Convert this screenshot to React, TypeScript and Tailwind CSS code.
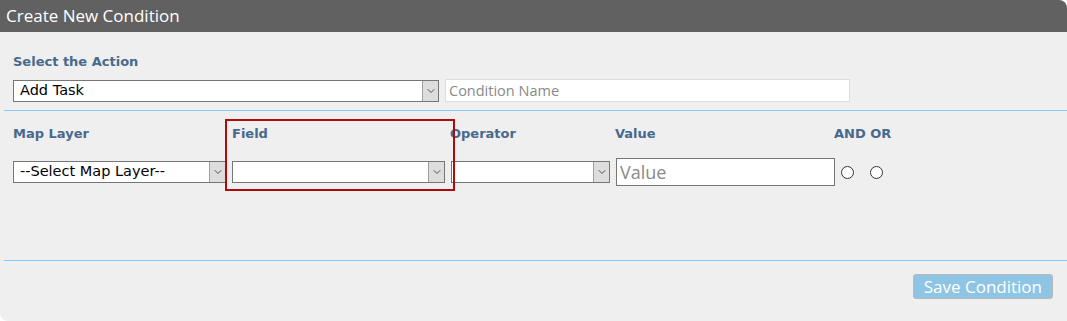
import { ChevronDown } from 'lucide-react'

const label = "text-[13px] font-bold leading-4 text-[#47698c] font-['DejaVu_Sans',sans-serif]"

function FakeSelect({ value, width }: { value?: string; width: string }) {
    return (
        <div className={`flex h-[22px] ${width} items-stretch border border-[#767676] bg-white`}>
            <div className="flex flex-1 items-center overflow-hidden pl-[6px] font-['DejaVu_Sans',sans-serif] text-[14.5px] text-black">
                {value}
            </div>
            <div className="flex w-[16px] items-center justify-center border-l border-[#a0a0a0] bg-[#dddddd]">
                <ChevronDown size={12} strokeWidth={1.8} className="text-[#444]" />
            </div>
        </div>
    )
}

function Radio() {
    return <span className="h-[13px] w-[13px] rounded-full border border-[#333] bg-white" />
}

export default function App() {
    return (
        <div className="relative flex h-[321px] w-[1067px] flex-col overflow-hidden rounded-tr-[8px] rounded-bl-[8px] bg-[#efefef]">
            <div className="flex h-8 items-center bg-[#616161] px-[6px] font-['Open_Sans',sans-serif] text-[17px] text-white">
                Create New Condition
            </div>

            <div className="px-[13px] pt-[22px]">
                <div className={label}>Select the Action</div>
                <div className="mt-[9px] flex items-center gap-[6px]">
                    <FakeSelect value="Add Task" width="w-[426px]" />
                    <input
                        placeholder="Condition Name"
                        className="h-[23px] w-[405px] border border-[#dcdcdc] bg-white px-[3px] font-['Open_Sans',sans-serif] text-[14.5px] outline-none placeholder:text-[#8a8a8a]"
                    />
                </div>
            </div>

            <div className="mt-[8px] ml-1 border-t border-[#86ccf7]" />

            <div className="flex px-[13px] pt-[15px]">
                <div className="w-[219px]">
                    <div className={label}>Map Layer</div>
                </div>
                <div className="w-[218px]">
                    <div className={label}>Field</div>
                </div>
                <div className="w-[165px]">
                    <div className={label}>Operator</div>
                </div>
                <div className="w-[219px]">
                    <div className={label}>Value</div>
                </div>
                <div className={label}>AND OR</div>
            </div>

            <div className="mt-[16px] flex items-center px-[13px]">
                <FakeSelect value="--Select Map Layer--" width="w-[213px]" />
                <div className="ml-[6px]">
                    <FakeSelect width="w-[213px]" />
                </div>
                <div className="ml-[6px]">
                    <FakeSelect width="w-[159px]" />
                </div>
                <input
                    placeholder="Value"
                    className="ml-[6px] h-[28px] w-[219px] border border-[#767676] bg-white px-[3px] font-['Open_Sans',sans-serif] text-[18px] outline-none placeholder:text-[#8a8a8a]"
                />
                <div className="ml-[6px] flex items-center gap-4">
                    <Radio />
                    <Radio />
                </div>
            </div>

            <div className="absolute top-[119px] left-[225px] h-[72px] w-[230px] border-2 border-[#b00a0a]" />

            <div className="mt-[74px] ml-1 border-t border-[#86ccf7]" />

            <div className="flex justify-end px-[14px] pt-[13px]">
                <button className="h-[25px] rounded-[3px] border border-[#b9b9b9] bg-[#8ec5e5] px-[10px] font-['Open_Sans',sans-serif] text-[17px] leading-none text-white">
                    Save Condition
                </button>
            </div>
        </div>
    )
}
